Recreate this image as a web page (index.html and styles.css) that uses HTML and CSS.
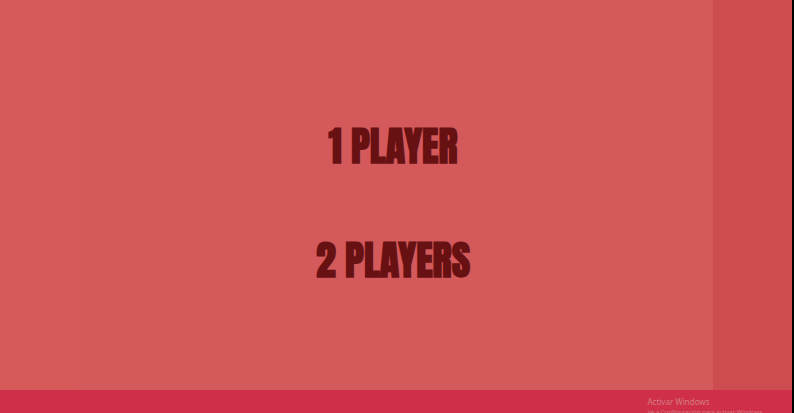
FILE: index.html
```html
<!DOCTYPE html>
<html lang="en">
<head>
  <meta charset="utf-8">
  <meta name="viewport" content="width=device-width, initial-scale=1">
  <title>Players</title>
  <link rel="stylesheet" href="styles.css">
</head>
<body>
  <main class="stage">
    <nav class="menu">
      <button class="option" type="button">1 PLAYER</button>
      <button class="option" type="button">2 PLAYERS</button>
    </nav>
    <div class="edge"></div>
  </main>
  <footer class="bar">
    <div class="notice" lang="es">
      <p class="notice-title">Activar Windows</p>
      <p class="notice-text">Ve a Configuración para activar Windows.</p>
    </div>
  </footer>
</body>
</html>
```
FILE: styles.css
```css
* {
  box-sizing: border-box;
}

body {
  margin: 0;
  height: 100vh;
  display: flex;
  flex-direction: column;
  overflow: hidden;
  border-right: 2px solid #050000;
  background: #cf2f49;
}

.stage {
  flex: 1;
  display: grid;
  grid-template-columns: 10% 1fr 10%;
  background: #d55a59;
}

.menu {
  grid-column: 2;
  display: flex;
  flex-direction: column;
  align-items: center;
  justify-content: center;
  gap: 64px;
  padding: 16px 6px 0 0;
  background: #d4595b;
}

.option {
  padding: 0;
  border: 0;
  background: none;
  color: #681113;
  font-family: Anton, "Liberation Sans Narrow", "Liberation Sans", sans-serif;
  font-size: 40px;
  font-weight: 700;
  line-height: 50px;
  cursor: pointer;
}

.edge {
  background: #cd4c50;
}

.bar {
  height: 23px;
  display: flex;
  justify-content: flex-end;
  overflow: hidden;
  padding: 6px 28px 0 0;
}

.notice {
  color: #d47d84;
  font-family: "Noto Sans", sans-serif;
  white-space: nowrap;
}

.notice-title,
.notice-text {
  margin: 0;
}

.notice-title {
  font-size: 8px;
  line-height: 12px;
}

.notice-text {
  font-size: 6px;
  line-height: 8px;
}
```
